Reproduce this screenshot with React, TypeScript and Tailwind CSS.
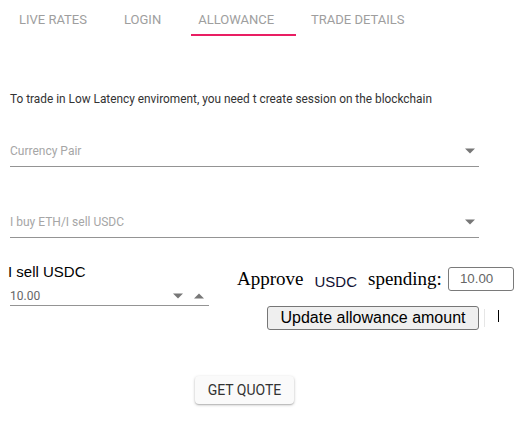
import { useState } from "react";

const tabs = ["Live Rates", "Login", "Allowance", "Trade Details"];

function Caret({ up = false }: { up?: boolean }) {
  return (
    <svg width="12" height="6" viewBox="0 0 12 6" className="shrink-0">
      <polygon points={up ? "1,5.5 11,5.5 6,0.5" : "1,0.5 11,0.5 6,5.5"} fill="#777777" />
    </svg>
  );
}

function SelectField({ placeholder }: { placeholder: string }) {
  return (
    <div className="flex items-center border-b border-[#949494] pb-[7px]">
      <span className="flex-1 text-[12px] leading-[16px] text-[#a6a6a6]">{placeholder}</span>
      <span className="mr-[3px]">
        <Caret />
      </span>
    </div>
  );
}

function App() {
  const [active, setActive] = useState("Allowance");

  return (
    <div className="w-[531px] h-[427px] bg-white font-['Roboto',sans-serif]">
      {/* tabs */}
      <div className="flex h-[36px] pl-[19px] gap-[37px]">
        {tabs.map((t) => (
          <button
            key={t}
            onClick={() => setActive(t)}
            className="relative h-full pt-[3px] text-[13px] uppercase text-[#9e9e9e]"
          >
            {t}
            {active === t && (
              <span className="absolute bottom-0 left-[-7px] w-[105px] h-[2px] bg-[#e91e63]" />
            )}
          </button>
        ))}
      </div>

      <div className="ml-[10px] w-[469px]">
        <p className="mt-[55px] text-[11.85px] leading-[16px] text-[#333333]">
          To trade in Low Latency enviroment, you need t create session on the blockchain
        </p>

        <div className="mt-[36px]">
          <SelectField placeholder="Currency Pair" />
        </div>
        <div className="mt-[47px]">
          <SelectField placeholder="I buy ETH/I sell USDC" />
        </div>

        <div className="flex mt-[25px]">
          <div className="w-[199px] shrink-0">
            <div className="ml-[-2px] font-['Liberation_Sans',Arial,sans-serif] text-[15px] leading-[18px] text-black">
              I sell USDC
            </div>
            <div className="flex items-center mt-[7px] border-b border-[#949494] pb-[1px]">
              <span className="flex-1 text-[12px] leading-[16px] text-[#666666]">10.00</span>
              <Caret />
              <span className="ml-[9px] mr-[4px]">
                <Caret up />
              </span>
            </div>
          </div>

          <div className="ml-[28px] mt-[4px] shrink-0">
            <div className="flex items-center h-[24px]">
              <span className="font-['Liberation_Serif','Times_New_Roman',serif] text-[19px] leading-[22px] text-black">
                Approve
              </span>
              <span className="ml-[11px] mt-[5px] font-['Liberation_Sans',Arial,sans-serif] text-[15px] leading-[18px] text-[#111133]">
                USDC
              </span>
              <span className="ml-[11px] font-['Liberation_Serif','Times_New_Roman',serif] text-[19px] leading-[22px] text-black">
                spending:
              </span>
              <div className="ml-[6px] w-[66px] h-[24px] border border-[#7a7a7a] rounded-[3px] flex items-center pl-[11px] font-['Liberation_Sans',Arial,sans-serif] text-[13.33px] text-[#666666]">
                10.00
              </div>
            </div>
            <div className="flex items-center mt-[15px] ml-[30px]">
              <button className="h-[24px] w-[212px] border border-[#767676] rounded-[3px] bg-[#efefef] font-['Liberation_Sans',Arial,sans-serif] text-[16px] leading-[18px] text-black">
                Update allowance amount
              </button>
              <span className="ml-[5px] w-px h-[18px] bg-[#e6e6e6]" />
              <span className="ml-[13px] w-px h-[12px] bg-black mb-[5px]" />
            </div>
          </div>
        </div>

        <div className="flex justify-center mt-[46px]">
          <button className="h-[28px] px-[13px] bg-[#fafafa] rounded-[4px] text-[14px] text-[#333333] shadow-[0_1px_3px_rgba(0,0,0,0.25),0_1px_1px_rgba(0,0,0,0.12)]">
            GET QUOTE
          </button>
        </div>
      </div>
    </div>
  );
}

export default App;
